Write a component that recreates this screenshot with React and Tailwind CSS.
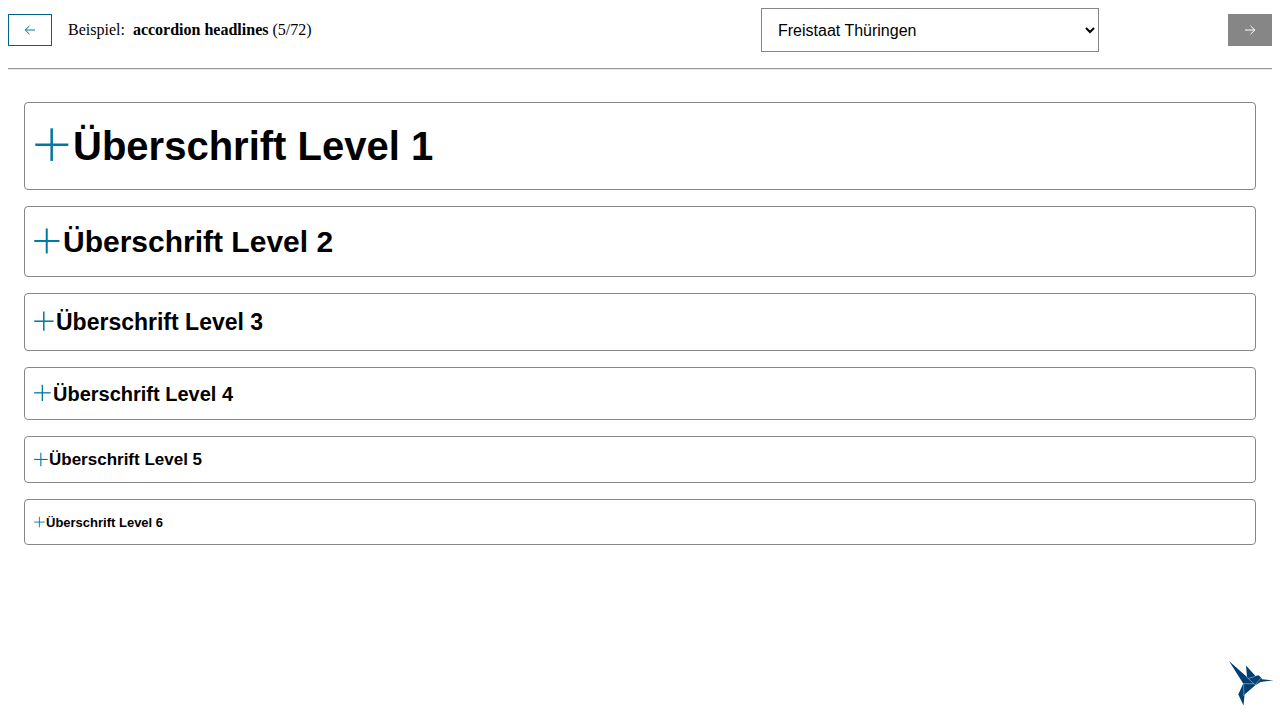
import { useState } from "react";

const headlines = [
  { Tag: "h1", level: 1, box: "h-[88px]", text: "text-[40px] gap-1", icon: "size-[34px] ml-px", stroke: 2.5 },
  { Tag: "h2", level: 2, box: "h-[71px]", text: "text-[30px] gap-[3px]", icon: "size-[26px]", stroke: 2 },
  { Tag: "h3", level: 3, box: "h-[58px]", text: "text-[23px] gap-[2px]", icon: "size-5", stroke: 1.5 },
  { Tag: "h4", level: 4, box: "h-[53px]", text: "text-[20px] gap-[2px]", icon: "size-[17px]", stroke: 1.3 },
  { Tag: "h5", level: 5, box: "h-[47px]", text: "text-[17px] gap-px", icon: "size-[14px]", stroke: 1.1 },
  { Tag: "h6", level: 6, box: "h-[46px]", text: "text-[13px] gap-px", icon: "size-[11px]", stroke: 0.9 },
];

function Plus({ className, stroke }) {
  return (
    <svg className={"shrink-0 overflow-visible text-[#0077a3] " + className} fill="none" stroke="currentColor" strokeWidth={stroke} aria-hidden="true">
      <line x1="1%" y1="46%" x2="98%" y2="46%" />
      <line x1="49%" y1="-2%" x2="49%" y2="94%" />
    </svg>
  );
}

function Arrow({ right }) {
  return (
    <svg viewBox="0 0 12 12" className="size-3" fill="none" stroke="currentColor" strokeWidth="1" aria-hidden="true">
      {right ? <path d="M1 6h10M6.5 1.8 10.8 6 6.5 10.2" /> : <path d="M11 6H1M5.5 1.8 1.2 6l4.3 4.2" />}
    </svg>
  );
}

function Hummingbird() {
  return (
    <svg viewBox="0 0 60 60" className="size-[60px]" aria-hidden="true">
      <path
        fill="#003e73"
        d="M9 6 27 22 26 10.5 35.5 21 38.5 20.2 41 22.5 42 24.2 53.5 25.4 40.5 27 35 30.5 24.6 39.5 23.5 50.5 18.3 39.5 23.2 28.5Z"
      />
      <path
        fill="none"
        stroke="#a5c0d5"
        strokeWidth="0.6"
        d="M26 21.5 34 28.8M23 28.6 34 28.8 36 30M28 23.5 35.5 21.3M35.5 29.5 41 23M23.7 28.8 23.8 41"
      />
    </svg>
  );
}

export default function App() {
  const [open, setOpen] = useState(null);
  return (
    <div className="relative min-h-screen bg-white p-2 text-black">
      <header className="flex h-11 items-center">
        <button type="button" aria-label="Vorheriges Beispiel" className="flex h-8 w-11 items-center justify-center border border-[#006187] text-[#0077a3]">
          <Arrow />
        </button>
        <p className="ml-4 font-['Liberation_Serif',serif] text-base">
          Beispiel:&nbsp; <strong>accordion headlines</strong> (5/72)
        </p>
        <select
          aria-label="Theme"
          className="ml-auto mr-[129px] h-11 w-[338px] border border-[#868686] bg-white pl-3 font-['Liberation_Sans',sans-serif] text-base"
        >
          <option>Freistaat Thüringen</option>
        </select>
        <button type="button" disabled aria-label="Nächstes Beispiel" className="flex h-8 w-11 items-center justify-center bg-[#868686] text-white">
          <Arrow right />
        </button>
      </header>
      <hr className="mt-4 h-[2px] border-t border-b border-t-[#999999] border-b-[#e5e5e5]" />
      <main className="mt-8 flex flex-col gap-4 px-4 font-['Liberation_Sans',sans-serif]">
        {headlines.map(({ Tag, level, box, text, icon, stroke }) => (
          <section key={level} className="rounded border border-[#868686]">
            <Tag className={"-my-px font-bold leading-none " + box}>
              <button
                type="button"
                aria-expanded={open === level}
                onClick={() => setOpen(open === level ? null : level)}
                className={"flex size-full items-center pl-[9px] text-left " + text}
              >
                <Plus className={icon} stroke={stroke} />
                <span>Überschrift Level {level}</span>
              </button>
            </Tag>
          </section>
        ))}
      </main>
      <a href="#kolibri" aria-label="KoliBri" className="absolute right-0 bottom-[5px]">
        <Hummingbird />
      </a>
    </div>
  );
}
